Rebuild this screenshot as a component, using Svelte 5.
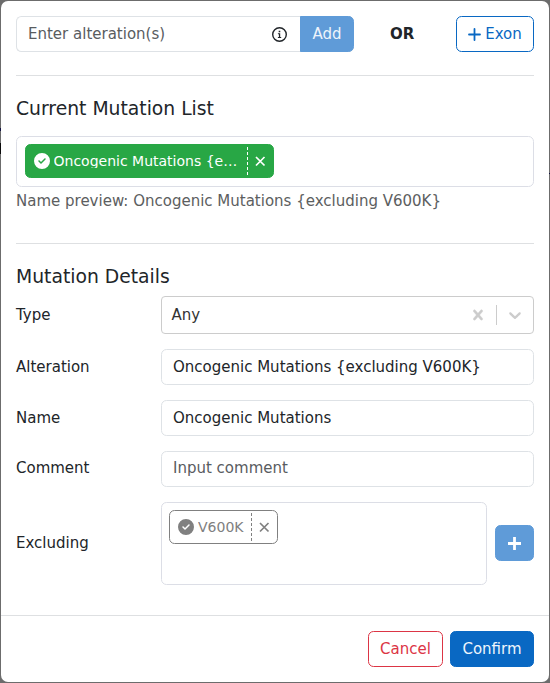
<script>
  let alteration = $state('Oncogenic Mutations {excluding V600K}');
  let name = $state('Oncogenic Mutations');
  let comment = $state('');
  let draft = $state('');
  const checkPath = 'M256 512A256 256 0 1 0 256 0a256 256 0 1 0 0 512zM369 209L241 337c-9.400 9.400-24.600 9.400-33.900 0l-64-64c-9.400-9.400-9.400-24.600 0-33.900s24.600-9.400 33.900 0l47 47L335 175c9.400-9.400 24.600-9.400 33.900 0s9.400 24.600 0 33.900z';
  const closePath = 'M2 2L10.500 10.500M10.500 2L2 10.500';
</script>

<div class="modal">
  <main>
    <div class="top">
      <div class="entry">
        <input class="draft" placeholder="Enter alteration(s)" bind:value={draft} />
        <svg class="info" viewBox="0 0 15 15" width="15" height="15">
          <circle cx="7.500" cy="7.500" r="6.800" fill="none" stroke="#212529" stroke-width="1.400" />
          <path d="M6.700 3.700h1.600v1.500H6.700zM5.900 6.200h2.300v3.900h1v1H5.900v-1h1v-2.900h-1z" fill="#212529" />
        </svg>
        <button class="add">Add</button>
      </div>
      <b>OR</b>
      <button class="exon">
        <svg viewBox="0 0 13 13" width="13" height="13"><path d="M6.500 1v11M1 6.500h11" stroke="currentColor" stroke-width="1.800" stroke-linecap="round" /></svg>
        <span>Exon</span>
      </button>
    </div>
    <hr />
    <h5>Current Mutation List</h5>
    <div class="list">
      <div class="chip green">
        <svg viewBox="0 0 512 512" width="16" height="16"><path fill="currentColor" d={checkPath} /></svg>
        <span class="label">Oncogenic Mutations {'{'}e…</span>
        <span class="close"><svg viewBox="0 0 13 13" width="13" height="13"><path d={closePath} stroke="currentColor" stroke-width="1.700" /></svg></span>
      </div>
    </div>
    <div class="preview">Name preview: Oncogenic Mutations {'{'}excluding V600K{'}'}</div>
    <hr class="second" />
    <h5 class="details">Mutation Details</h5>
    <div class="row type">
      <span class="name">Type</span>
      <div class="select">
        <span>Any</span>
        <svg class="clear" viewBox="0 0 20 20" width="20" height="20"><path fill="#ccc" stroke="#ccc" stroke-width="0.400" d="M14.348 14.849c-0.469 0.469-1.229 0.469-1.697 0l-2.651-3.030-2.651 3.029c-0.469 0.469-1.229 0.469-1.697 0-0.469-0.469-0.469-1.229 0-1.697l2.758-3.150-2.759-3.152c-0.469-0.469-0.469-1.228 0-1.697s1.228-0.469 1.697 0l2.652 3.031 2.651-3.031c0.469-0.469 1.228-0.469 1.697 0s0.469 1.229 0 1.697l-2.758 3.152 2.758 3.150c0.469 0.469 0.469 1.229 0 1.698z" /></svg>
        <i></i>
        <svg class="arrow" viewBox="0 0 20 20" width="20" height="20"><path fill="#ccc" d="M4.516 7.548c0.436-0.446 1.043-0.481 1.576 0l3.908 3.747 3.908-3.747c0.533-0.481 1.141-0.446 1.574 0 0.436 0.445 0.408 1.197 0 1.615-0.406 0.418-4.695 4.502-4.695 4.502-0.217 0.223-0.502 0.335-0.787 0.335s-0.570-0.112-0.789-0.335c0 0-4.287-4.084-4.695-4.502s-0.436-1.170 0-1.615z" /></svg>
      </div>
    </div>
    <label class="row"><span class="name">Alteration</span><input bind:value={alteration} /></label>
    <label class="row"><span class="name">Name</span><input bind:value={name} /></label>
    <label class="row comment"><span class="name">Comment</span><input placeholder="Input comment" bind:value={comment} /></label>
    <div class="row excluding">
      <span class="name">Excluding</span>
      <div class="box">
        <div class="chip gray">
          <svg viewBox="0 0 512 512" width="16" height="16"><path fill="currentColor" d={checkPath} /></svg>
          <span class="label">V600K</span>
          <span class="close"><svg viewBox="0 0 13 13" width="13" height="13"><path d={closePath} stroke="currentColor" stroke-width="1.700" /></svg></span>
        </div>
      </div>
      <button class="plus" aria-label="Add exclusion"><svg viewBox="0 0 13 13" width="13" height="13"><path d="M6.500 0v13M0 6.500h13" stroke="currentColor" stroke-width="2.800" /></svg></button>
    </div>
  </main>
  <footer>
    <button class="cancel">Cancel</button>
    <button class="confirm">Confirm</button>
  </footer>
</div>

<style>
  :global(body) {
    background:
      linear-gradient(#101040, #101040) 0 128px / 1px 3px no-repeat,
      linear-gradient(#0a0a0a, #0a0a0a) 0 143px / 1px 11px no-repeat,
      linear-gradient(#101040, #101040) 549px 173px / 1px 1px no-repeat,
      #6c6c6c;
  }
  :global(*) { box-sizing: border-box; }
  .modal {
    width: 548px; height: 681px; margin: 1px; background: #fff; border-radius: 7px;
    font: 15px/22px "DejaVu Sans", sans-serif; color: #212529;
    display: flex; flex-direction: column; overflow: hidden;
  }
  :global(#app) { display: flow-root; }
  main { flex: 1; padding: 15px; display: flex; flex-direction: column; }
  input, button { font: inherit; }
  input { height: 36px; min-width: 0; flex: 1; border: 1px solid #dee2e6; border-radius: 5.500px; padding: 0 11px; color: #212529; background: #fff; outline: none; }
  input::placeholder { color: #595c5f; opacity: 1; }
  button { height: 36px; border: 1px solid; border-radius: 5.500px; padding: 0; display: flex; align-items: center; justify-content: center; background: #fff; }
  .top { display: flex; align-items: center; height: 36px; }
  .entry { display: flex; align-items: center; width: 338px; height: 36px; border: 1px solid #dee2e6; border-right: 0; border-radius: 5.500px; }
  .draft { border: 0; height: 34px; background: transparent; }
  .info { margin: 1px 13px 0 0; flex: none; }
  .add { width: 54px; flex: none; border-color: #5f9bd8; background: #5f9bd8; color: #edf4fb; border-radius: 0 5.500px 5.500px 0; }
  .top b { width: 102px; padding-left: 36px; }
  .exon { width: 78px; color: #0968c3; gap: 4px; }
  hr { width: 100%; height: 1px; border: 0; margin: 23px 0 0; background: #dee0e2; flex: none; }
  h5 { font-size: 18.750px; line-height: 22px; font-weight: 400; margin: 22px 0 0; }
  .list { height: 51px; border: 1px solid #dcdee6; border-radius: 5.500px; margin-top: 16px; padding: 7px 8px; flex: none; }
  .chip { height: 34px; display: flex; align-items: center; border: 1px solid; border-radius: 5.500px; padding-left: 8px; font-size: 14px; line-height: 14px; }
  .chip svg { flex: none; }
  .chip .label { margin-left: 3.500px; white-space: nowrap; overflow: hidden; flex: 1; }
  .close { width: 26px; height: 28px; border-left: 1px dashed currentColor; display: flex; align-items: center; justify-content: center; flex: none; }
  .green { width: 249px; background: #28a745; border-color: #28a745; color: #fff; }
  .gray { width: 109px; color: gray; }
  .preview { color: #5c5e60; margin-top: 3px; }
  .second { margin-top: 31px; }
  .row { display: flex; align-items: center; height: 36px; margin-top: 15px; flex: none; }
  .row .name { width: 145px; flex: none; }
  .row.type { height: 38px; margin-top: 8px; }
  .select { flex: 1; height: 38px; border: 1px solid #ccc; border-radius: 4px; display: flex; align-items: center; padding: 0 8px 0 9.500px; color: #333; }
  .select span { flex: 1; }
  .select i { width: 1px; height: 20px; background: #ccc; margin: 0 8px; }
  .comment .name { padding-bottom: 2px; }
  .comment input { padding-bottom: 2px; }
  .row.excluding { height: 83px; }
  .excluding .name { padding-bottom: 2px; }
  .box { width: 326px; height: 83px; border: 1px solid #dcdee6; border-radius: 5.500px; padding: 7px; }
  .gray .label { margin-left: 4px; }
  .plus { width: 39px; margin: 0 0 1px 8px; background: #5f9bd8; border-color: #5f9bd8; color: #fff; }
  footer { height: 67px; border-top: 1px solid #dee0e2; display: flex; align-items: center; justify-content: flex-end; gap: 7px; padding-right: 15px; flex: none; }
  .cancel { width: 75px; color: #dc3545; }
  .confirm { width: 84px; color: #eef5fc; background: #0968c3; border-color: #0968c3; }
</style>
